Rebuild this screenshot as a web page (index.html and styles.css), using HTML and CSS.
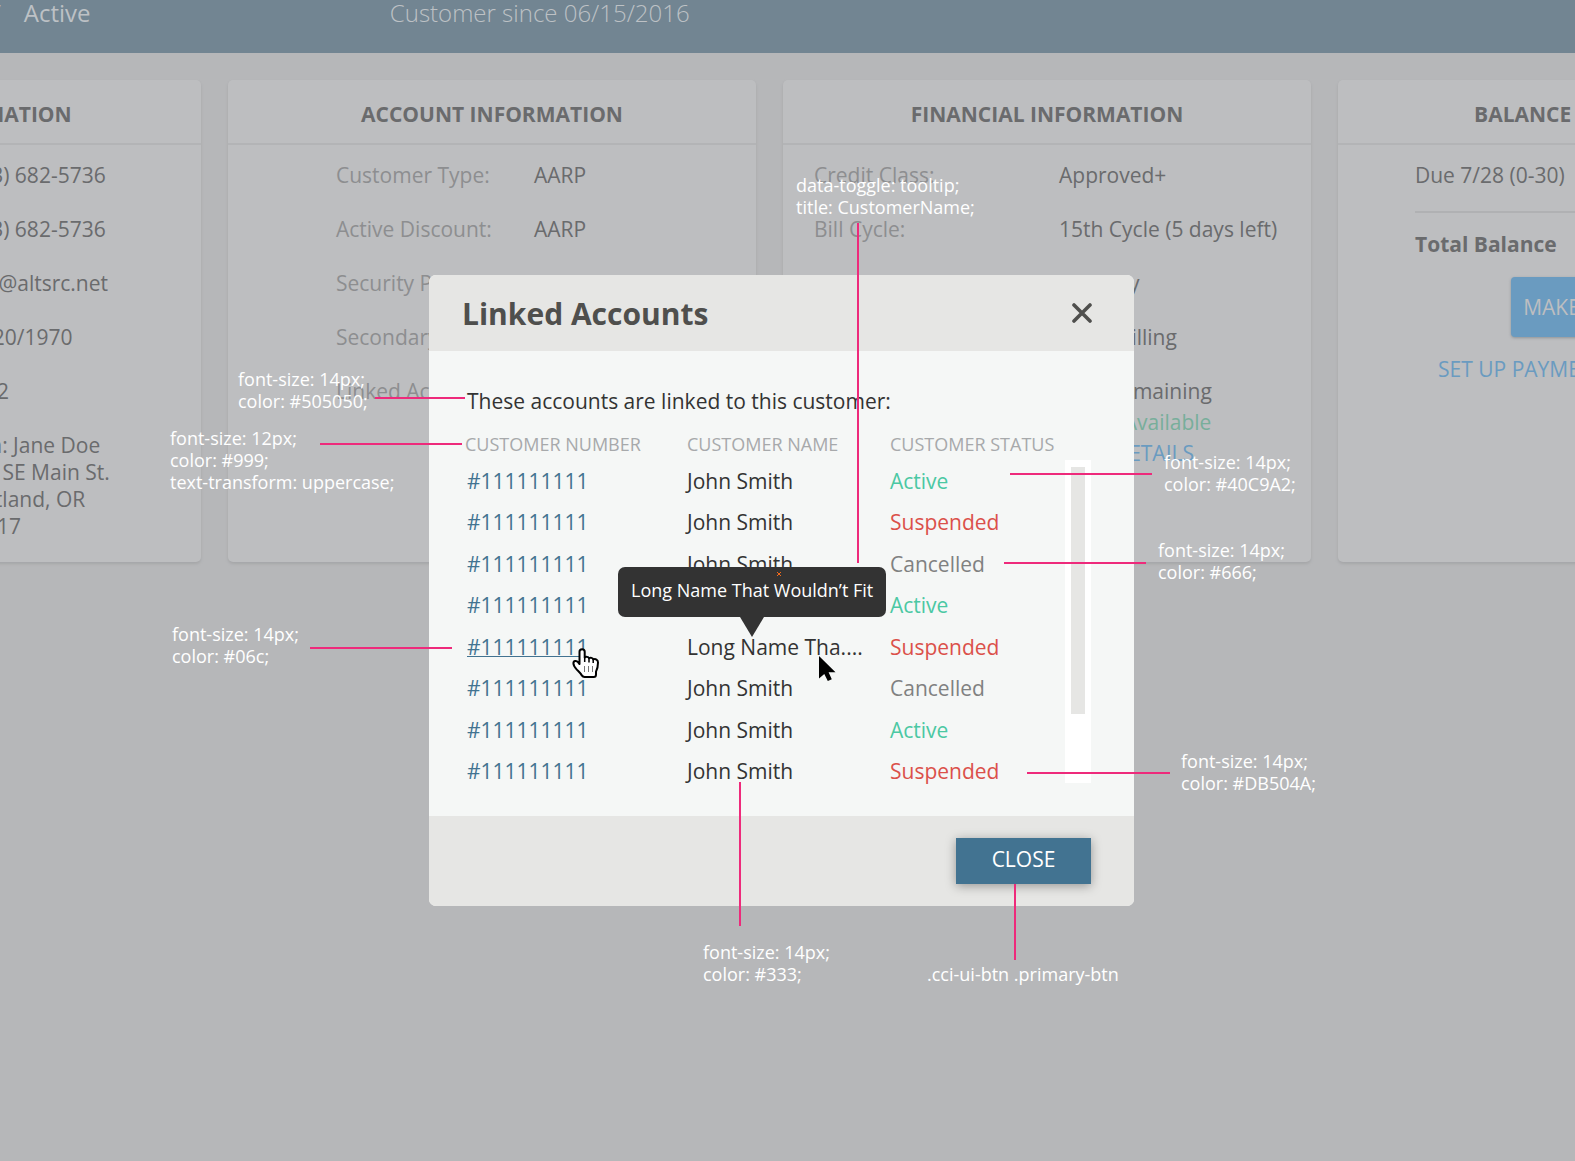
FILE: index.html
```html
<!DOCTYPE html>
<html lang="en">
<head>
<meta charset="utf-8">
<title>Linked Accounts</title>
<link rel="stylesheet" href="styles.css">
</head>
<body>
<div class="page">
  <header class="topbar">
    <span>/</span>
    <span class="topbar-status">Active</span>
    <span class="topbar-since">Customer since 06/15/2016</span>
  </header>

  <main class="cards">
    <section class="card card-contact">
      <h2>PERSONAL INFORMATION</h2>
      <dl>
        <dt>Home Phone:</dt><dd>(503) 682-5736</dd>
        <dt>Work Phone:</dt><dd>(503) 682-5736</dd>
        <dt>Email:</dt><dd>ann@altsrc.net</dd>
        <dt>Date of Birth:</dt><dd>10/20/1970</dd>
        <dt>SSN:</dt><dd>6842</dd>
        <dt>Address:</dt><dd>Attn: Jane Doe<br>123 SE Main St.<br>Portland, OR<br>97217</dd>
      </dl>
    </section>
    <section class="card card-account">
      <h2>ACCOUNT INFORMATION</h2>
      <dl>
        <dt>Customer Type:</dt><dd>AARP</dd>
        <dt>Active Discount:</dt><dd>AARP</dd>
        <dt>Security Passcode:</dt><dd>none</dd>
        <dt>Secondary PIN:</dt><dd>none</dd>
        <dt>Linked Accounts:</dt><dd>8</dd>
      </dl>
    </section>
    <section class="card card-financial">
      <h2>FINANCIAL INFORMATION</h2>
      <dl>
        <dt>Credit Class:</dt><dd>Approved+</dd>
        <dt>Bill Cycle:</dt><dd>15th Cycle (5 days left)</dd>
        <dt>Payment Preference:</dt><dd>Monthly</dd>
        <dt>Billing Type:</dt><dd>Email Billing</dd>
        <dt>Installments:</dt>
        <dd class="stack"><span>1/24 Remaining</span><span class="available">Credit Available</span><a href="#details">VIEW DETAILS</a></dd>
      </dl>
    </section>
    <section class="card card-balance">
      <h2>BALANCE INFORMATION</h2>
      <div class="balance">
        <p class="due">Due 7/28 (0-30)</p>
        <p class="total">Total Balance</p>
        <button type="button" class="pay">MAKE PAYMENT</button>
        <a href="#arrangement">SET UP PAYMENT ARRANGEMENT</a>
      </div>
    </section>
  </main>

  <div class="overlay">
    <div class="modal" role="dialog" aria-labelledby="modal-title">
      <div class="modal-head">
        <h1 id="modal-title">Linked Accounts</h1>
        <button type="button" class="dismiss" aria-label="Close dialog">
          <svg width="20" height="20" viewBox="0 0 20 20"><path d="M2 2 18 18M18 2 2 18" stroke="#4f4f4d" stroke-width="3.6" stroke-linecap="round"/></svg>
        </button>
      </div>
      <div class="modal-body">
        <p class="intro">These accounts are linked to this customer:</p>
        <div class="list">
          <table>
            <thead>
              <tr><th class="col-number">Customer Number</th><th class="col-name">Customer Name</th><th class="col-status">Customer Status</th></tr>
            </thead>
            <tbody>
              <tr><td><a href="#a1">#111111111</a></td><td>John Smith</td><td class="active">Active</td></tr>
              <tr><td><a href="#a2">#111111111</a></td><td>John Smith</td><td class="suspended">Suspended</td></tr>
              <tr><td><a href="#a3">#111111111</a></td><td>John Smith</td><td class="cancelled">Cancelled</td></tr>
              <tr><td><a href="#a4">#111111111</a></td><td>John Smith</td><td class="active">Active</td></tr>
              <tr>
                <td><a href="#a5" class="hovered">#111111111</a></td>
                <td class="has-tip">Long Name Tha....
                  <span class="tooltip" role="tooltip">Long Name That Wouldn’t Fit
                    <svg class="tip-mark" width="4" height="4" viewBox="0 0 4 4"><path d="M0 0 4 4M4 0 0 4" stroke="#f26a1b"/></svg>
                  </span>
                </td>
                <td class="suspended">Suspended</td>
              </tr>
              <tr><td><a href="#a6">#111111111</a></td><td>John Smith</td><td class="cancelled">Cancelled</td></tr>
              <tr><td><a href="#a7">#111111111</a></td><td>John Smith</td><td class="active">Active</td></tr>
              <tr><td><a href="#a8">#111111111</a></td><td>John Smith</td><td class="suspended">Suspended</td></tr>
            </tbody>
          </table>
          <div class="track"><div class="thumb"></div></div>
        </div>
      </div>
      <div class="modal-foot">
        <button type="button" class="primary-btn">CLOSE</button>
      </div>
    </div>
  </div>

  <!-- Design notes pinned over the dialog -->
  <div class="notes">
    <svg class="leaders" width="1575" height="1161" viewBox="0 0 1575 1161">
      <path d="M375 398H465M320 444H462M858 223V563M1010 474H1152M1004 563H1146M1027 773H1170M310 648H452M740 782V926M1015 884V960"/>
    </svg>
    <p class="note note-intro">font-size: 14px;<br>color: #505050;</p>
    <p class="note note-heading">font-size: 12px;<br>color: #999;<br>text-transform: uppercase;</p>
    <p class="note note-tooltip">data-toggle: tooltip;<br>title: CustomerName;</p>
    <p class="note note-active">font-size: 14px;<br>color: #40C9A2;</p>
    <p class="note note-cancelled">font-size: 14px;<br>color: #666;</p>
    <p class="note note-suspended">font-size: 14px;<br>color: #DB504A;</p>
    <p class="note note-link">font-size: 14px;<br>color: #06c;</p>
    <p class="note note-name">font-size: 14px;<br>color: #333;</p>
    <p class="note note-button">.cci-ui-btn .primary-btn</p>

    <svg class="cursor-hand" width="28" height="31" viewBox="0 0 28 31">
      <path d="M7.500 16V3.800C7.500 .4 12.700 .4 12.700 3.800V9.500C13.800 8.400 16.400 8.700 17 10.200C18.500 9.300 20.600 9.800 21.200 11.400C23.500 10.600 26 11.600 26 14.500C26 18.500 25.600 20.500 24 23.600V26.500C24 28 23.300 29 21.800 29H12.600C11.300 29 10.500 28.500 9.800 27.400C8.200 24.800 6.500 23.400 4.800 21.600C3.300 20 1.400 17.500 1.400 15.300C1.400 12.600 4.600 12.400 6 14.200Z" fill="#fff" stroke="#000" stroke-width="2" stroke-linejoin="round"/>
      <path d="M12.700 9V14M17 10V14.500M21.200 11.500V15" stroke="#000" stroke-width="1.500"/>
      <path d="M12.500 18V24M16.500 18V24M20.500 18V24" stroke="#777"/>
    </svg>
    <svg class="cursor-arrow" width="17" height="26" viewBox="0 0 17 26">
      <path d="M0 0V22.500L5.300 18 8.800 25 12.800 23.200 9.600 16.300H16.500Z"/>
    </svg>
  </div>
</div>
</body>
</html>
```
FILE: styles.css
```css
* { box-sizing: border-box; }

body {
  margin: 0;
  background: #b6b7b9;
  color: #6a6b6d;
  font: 21px/27px "Open Sans", sans-serif;
}

h1, h2, p, dl, dd { margin: 0; }
a { color: #6a9bc0; text-decoration: none; }
button { border: 0; font: inherit; cursor: pointer; }

.page {
  position: relative;
  min-height: 100vh;
  overflow: hidden;
}

/* Top bar */
.topbar {
  display: flex;
  margin: -24px 0 0 -8px;
  padding: 20px 0 24px;
  background: #728592;
  color: #bdc1c5;
  font-size: 24px;
  line-height: 33px;
}
.topbar-status { width: 366px; margin-left: 23px; }
.topbar-since { font-weight: 300; }

/* Account cards */
.cards {
  display: flex;
  gap: 27px;
  margin-left: -327px;
  padding-top: 27px;
}
.card {
  flex: none;
  width: 528px;
  min-height: 482px;
  border-radius: 5px;
  background: #bdbec0;
  box-shadow: 0 2px 3px #a5a6a8;
}
.card h2 {
  padding: 20px 0 15px;
  border-bottom: 2px solid #b3b4b6;
  font-size: 21px;
  line-height: 28px;
  text-align: center;
}
.card dl {
  display: grid;
  row-gap: 27px;
  padding-top: 17px;
}
.card dt { color: #8d8e90; }
.card-contact dl { grid-template-columns: 180px 1fr; padding-left: 108px; }
.card-account dl { grid-template-columns: 198px 1fr; padding-left: 108px; }
.card-financial dl { grid-template-columns: 245px 1fr; padding-left: 31px; }
.stack { display: flex; flex-direction: column; gap: 4px; }
.available { color: #78ae9b; }

.balance {
  display: flex;
  flex-direction: column;
  align-items: center;
  padding: 17px 77px 0;
}
.balance p { align-self: stretch; }
.due { padding-bottom: 22px; border-bottom: 2px solid #b0b1b3; }
.total { padding: 18px 0 19px; font-weight: 700; }
.pay {
  height: 60px;
  margin-bottom: 19px;
  padding: 0 12px;
  border-radius: 4px;
  background: #6a9bc0;
  color: #bdbec0;
  box-shadow: 0 1px 3px #8f9397;
}

/* Dialog */
.overlay {
  position: absolute;
  inset: 0;
  display: flex;
  justify-content: center;
  align-items: flex-start;
  padding: 275px 12px 0 0;
}
.modal {
  width: 705px;
  border-radius: 7px;
  background: #f5f7f6;
  color: #333;
}
.modal-head {
  display: flex;
  justify-content: space-between;
  align-items: center;
  padding: 18px 42px 17px 33px;
  border-radius: 7px 7px 0 0;
  background: #e6e6e4;
}
.modal-head h1 { color: #4f4f4d; font-size: 30px; line-height: 41px; }
.dismiss { display: flex; padding: 0 0 2px; background: none; }

.modal-body { padding: 36px 43px 23px 36px; }
.intro { padding-left: 2px; line-height: 28px; }
.list { display: flex; margin-top: 17px; }

table { flex: 1; border-collapse: collapse; table-layout: fixed; }
th {
  padding: 0 0 5px;
  color: #a7a9ab;
  font-size: 18px;
  font-weight: 400;
  line-height: 24px;
  text-align: left;
  text-transform: uppercase;
  white-space: nowrap;
}
.col-number { width: 222px; }
.col-name { width: 203px; }
td { padding: 0; line-height: 41px; white-space: nowrap; }
tr:nth-child(even) td { padding-bottom: 1px; }
td:first-child { padding-left: 2px; }
td a { color: #427391; }
.hovered { text-decoration: underline 1px; text-underline-offset: 1px; }
.active { color: #4bc8a3; }
.suspended { color: #db504a; }
.cancelled { color: #808181; }

.track {
  width: 26px;
  margin: 28px 0 10px;
  padding: 7px 6px;
  background: #fff;
}
.thumb { height: 80%; background: #e6e6e4; }

.has-tip { position: relative; }
.tooltip {
  position: absolute;
  left: -69px;
  bottom: calc(100% + 10px);
  padding: 11px 13px 15px;
  border-radius: 7px;
  background: #333;
  color: #fff;
  font-size: 18px;
  line-height: 24px;
}
.tooltip::after {
  content: "";
  position: absolute;
  top: 100%;
  left: 50%;
  margin-left: -12px;
  border: 12px solid transparent;
  border-top: 20px solid #333;
  border-bottom: 0;
}
.tip-mark { position: absolute; top: 5px; left: 159px; }

.modal-foot {
  display: flex;
  justify-content: flex-end;
  padding: 22px 43px;
  border-radius: 0 0 7px 7px;
  background: #e6e6e4;
}
.primary-btn {
  width: 135px;
  height: 46px;
  padding: 0 0 4px;
  background: #427391;
  color: #fff;
  box-shadow: 0 2px 10px rgba(0, 0, 0, .35);
}

/* Design notes */
.notes { position: absolute; inset: 0; pointer-events: none; }
.leaders { position: absolute; top: 0; left: 0; fill: none; stroke: #ee2a7b; stroke-width: 2px; }
.note {
  position: absolute;
  color: #fff;
  font-size: 18px;
  line-height: 22px;
  white-space: nowrap;
}
.note-intro { left: 238px; top: 368px; }
.note-heading { left: 170px; top: 427px; }
.note-tooltip { left: 796px; top: 174px; }
.note-active { left: 1164px; top: 451px; }
.note-cancelled { left: 1158px; top: 539px; }
.note-suspended { left: 1181px; top: 750px; }
.note-link { left: 172px; top: 623px; }
.note-name { left: 703px; top: 941px; }
.note-button { left: 927px; top: 963px; }
.cursor-hand { position: absolute; left: 572px; top: 648px; }
.cursor-arrow { position: absolute; left: 819px; top: 656px; }
```
